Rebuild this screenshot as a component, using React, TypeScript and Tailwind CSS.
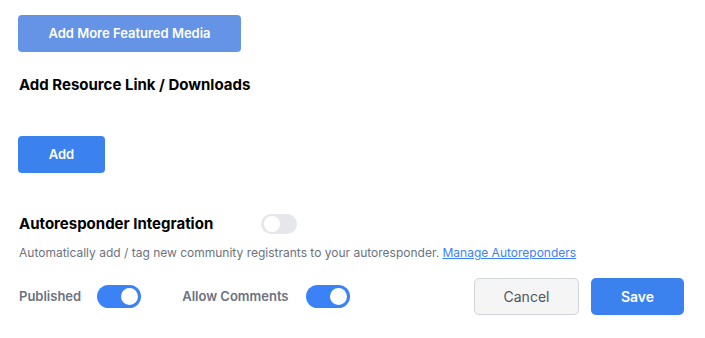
import { useState } from "react";

function Toggle({ on, onClick, size = "lg" }: { on: boolean; onClick: () => void; size?: "sm" | "lg" }) {
  const track = size === "lg" ? "w-[44px] h-[23px]" : "w-[36px] h-[20px]";
  const knob = size === "lg" ? "w-[17px] h-[17px]" : "w-[16px] h-[16px]";
  return (
    <button
      onClick={onClick}
      className={`${track} rounded-full flex items-center px-[3px] transition-colors ${
        on ? "bg-[#3b82f6] justify-end" : "bg-[#e5e7eb] justify-start"
      }`}
    >
      <span className={`${knob} rounded-full bg-white block`} />
    </button>
  );
}

export default function App() {
  const [auto, setAuto] = useState(false);
  const [published, setPublished] = useState(true);
  const [comments, setComments] = useState(true);

  return (
    <div className="w-[705px] h-[338px] bg-white font-['Inter',sans-serif] px-[18px] pt-[15px]">
      <button className="w-[223px] h-[37px] rounded-[4px] bg-[#6593e6] text-white text-[13px] font-semibold">
        Add More Featured Media
      </button>

      <h2 className="mt-[23px] pl-px text-[15px] font-bold text-black leading-[20px]">
        Add Resource Link / Downloads
      </h2>

      <button className="mt-[41px] w-[87px] h-[37px] rounded-[4px] bg-[#3b82ee] text-white text-[13px] font-semibold">
        Add
      </button>

      <div className="mt-[41px] flex items-center pl-px">
        <span className="w-[242px] text-[15px] font-bold text-black leading-[20px]">Autoresponder Integration</span>
        <Toggle size="sm" on={auto} onClick={() => setAuto(!auto)} />
      </div>

      <p className="mt-[11px] pl-px text-[12px] text-[#6b7280] leading-[16px]">
        Automatically add / tag new community registrants to your autoresponder.{" "}
        <a href="#" className="text-[#3b82f6] underline">Manage Autoreponders</a>
      </p>

      <div className="mt-[17px] flex items-center pl-px">
        <span className="text-[13px] font-semibold text-[#6b7280] mr-[16px]">Published</span>
        <Toggle on={published} onClick={() => setPublished(!published)} />
        <span className="ml-[41px] text-[13px] font-semibold text-[#6b7280] mr-[17px]">Allow Comments</span>
        <Toggle on={comments} onClick={() => setComments(!comments)} />
        <button className="ml-auto w-[105px] h-[37px] rounded-[5px] border border-[#d1d5db] bg-[#f5f5f5] text-[14px] text-[#4b5563]">
          Cancel
        </button>
        <button className="ml-[12px] mr-[3px] w-[93px] h-[37px] rounded-[5px] bg-[#3b82ee] text-white text-[14px] font-semibold">
          Save
        </button>
      </div>
    </div>
  );
}
